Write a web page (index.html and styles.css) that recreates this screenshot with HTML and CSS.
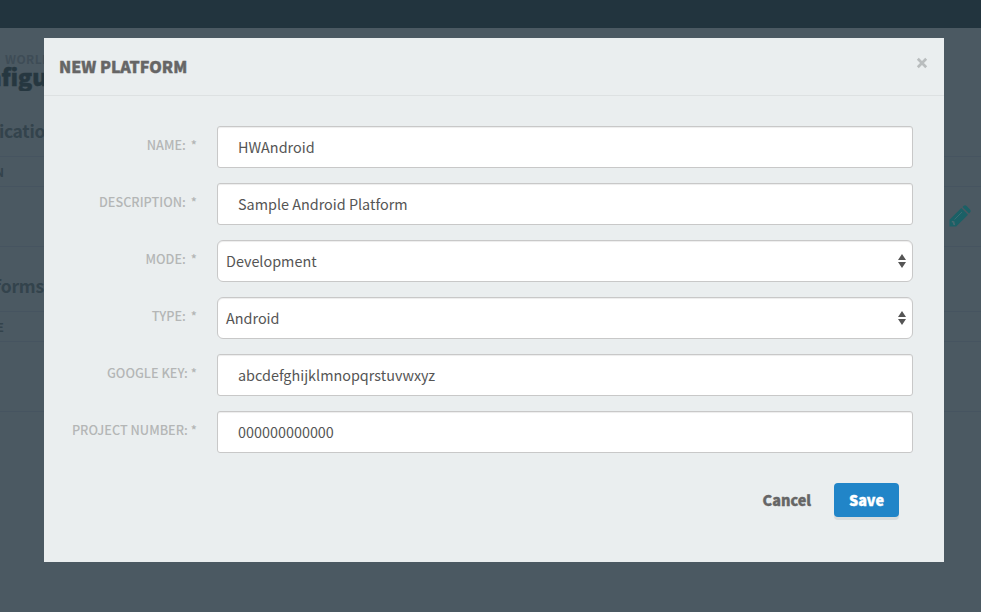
FILE: index.html
```html
<!DOCTYPE html>
<html lang="en">
<head>
<meta charset="utf-8">
<title>New Platform</title>
<link rel="stylesheet" href="styles.css">
</head>
<body>
<div class="page">
  <header class="topbar"></header>
  <main>
    <div class="crumb"><span>· WORLD</span></div>
    <h1><span>Configuration</span></h1>
    <h2 class="app"><span>Application</span></h2>
    <div class="row head"><span>ON</span></div>
    <div class="row item">
      <svg class="pencil" viewBox="0 0 22 22" width="22" height="22"><path d="M0.500 21.500V14.800L12.300 3L19 9.700L7.200 21.500zM13.500 1.900L14.800 .8Q16.200 -.3 17.600 1L21 4.400Q22.200 5.800 21.200 7.200L20.100 8.500z" fill="#1b6066"/><path d="M5.500 14.500L13 7" stroke="#4b7178" stroke-width=".7"/><path d="M2.800 16.500L4.800 17V19L6 19.500" fill="none" stroke="#4b6970" stroke-width="1.400"/></svg>
    </div>
    <h2 class="plat"><span>Platforms</span></h2>
    <div class="row head"><span>PE</span></div>
    <div class="row last"></div>
  </main>
</div>
<section class="modal">
  <div class="modal-head">
    <h3>NEW PLATFORM</h3>
    <svg class="close" viewBox="0 0 12 12" width="12" height="12"><path d="M1.800 1.800L10.200 10.200M10.200 1.800L1.800 10.200" stroke="#b9bdbe" stroke-width="2.700"/></svg>
  </div>
  <form>
    <div class="field"><label>NAME:<b>*</b></label><div class="control">HWAndroid</div></div>
    <div class="field"><label>DESCRIPTION:<b>*</b></label><div class="control">Sample Android Platform</div></div>
    <div class="field"><label>MODE:<b>*</b></label><div class="control select">Development<svg viewBox="0 0 8 14" width="8" height="14"><path d="M4 0L8 6H0zM4 14L0 8H8z" fill="#555"/></svg></div></div>
    <div class="field"><label>TYPE:<b>*</b></label><div class="control select">Android<svg viewBox="0 0 8 14" width="8" height="14"><path d="M4 0L8 6H0zM4 14L0 8H8z" fill="#555"/></svg></div></div>
    <div class="field"><label class="tight">GOOGLE KEY:<b>*</b></label><div class="control">abcdefghijklmnopqrstuvwxyz</div></div>
    <div class="field"><label class="tight">PROJECT NUMBER:<b>*</b></label><div class="control">000000000000</div></div>
    <div class="actions"><span class="cancel">Cancel</span><span class="save">Save</span></div>
  </form>
</section>
</body>
</html>
```
FILE: styles.css
```css
* { box-sizing: border-box; }
body {
  margin: 0;
  position: relative;
  height: 612px;
  overflow: hidden;
  background: #4b5962;
  font-family: "Noto Sans CJK SC", sans-serif;
}
h1, h2, h3 { margin: 0; }
.topbar { height: 28px; background: #22343e; }
main > *:not(.row) {
  width: 44px;
  display: flex;
  justify-content: flex-end;
  overflow: hidden;
  white-space: nowrap;
}
main span { flex: none; }
.crumb { height: 38px; padding-top: 21px; line-height: 20px; font-size: 12px; font-weight: 700; letter-spacing: .4px; color: #3e4c56; }
.crumb span { margin-right: -7px; }
h1 { height: 30px; margin-top: -5px; line-height: 30px; font-size: 23px; font-weight: 900; color: #263740; -webkit-text-stroke: .5px #263740; }
h1 span { margin-right: -74px; }
h2 { font-size: 17.5px; font-weight: 700; line-height: 24px; color: #33434c; }
.app { height: 65px; padding-top: 28px; }
.app span { margin-right: -12px; letter-spacing: -.3px; }
.row { border-top: 1px solid #465460; }
.head { height: 30px; font-size: 12px; font-weight: 700; line-height: 30px; color: #33434c; }
.head span { display: flex; width: 4px; justify-content: flex-end; }
.item { height: 60px; padding: 18px 10px 0 0; display: flex; justify-content: flex-end; }
main > .plat { width: auto; height: 65px; padding: 27px calc(100% - 44px) 0 0; border-top: 1px solid #465460; }
.plat span { letter-spacing: -.2px; }
.last { height: 71px; border-bottom: 1px solid #465460; }
.modal {
  position: absolute;
  left: 44px;
  top: 38px;
  width: 900px;
  height: 524px;
  background: #eaeeef;
}
.modal-head {
  height: 58px;
  padding: 0 16px 0 15px;
  border-bottom: 1px solid #dde1e2;
  display: flex;
  justify-content: space-between;
}
h3 { font-size: 16px; font-weight: 900; line-height: 57px; color: #666; -webkit-text-stroke: .4px #666; }
.close { margin-top: 19px; }
form { padding: 30px 31px 0 0; display: flex; flex-direction: column; gap: 15px; }
.field { display: flex; height: 42px; }
label {
  width: 173px;
  padding-right: 20px;
  text-align: right;
  font-size: 12.7px;
  font-weight: 500;
  line-height: 38px;
  color: #b4b6b6;
  white-space: nowrap;
}
label b { font-weight: 500; margin-left: 5px; }
.tight b { margin-left: 3px; }
.control {
  flex: 1;
  border: 1px solid #c8c8c8;
  border-radius: 3px;
  background: #fff;
  box-shadow: inset 0 1px 1px rgba(0,0,0,.075);
  padding: 0 20px;
  font-size: 14.4px;
  line-height: 40px;
  color: #555;
}
.select {
  border-radius: 6px;
  padding: 0 6px 0 8px;
  display: flex;
  justify-content: space-between;
  align-items: center;
}
.actions { display: flex; justify-content: flex-end; gap: 23px; margin: 15px 14px 0 0; height: 34px; line-height: 34px; font-size: 14.4px; font-weight: 900; }
.cancel { color: #666; -webkit-text-stroke: .35px #666; }
.save { width: 65px; border-radius: 4px; background: #2185c8; color: #fff; text-align: center; box-shadow: 0 3px 0 #d8dcdd; -webkit-text-stroke: .35px #fff; }
```
